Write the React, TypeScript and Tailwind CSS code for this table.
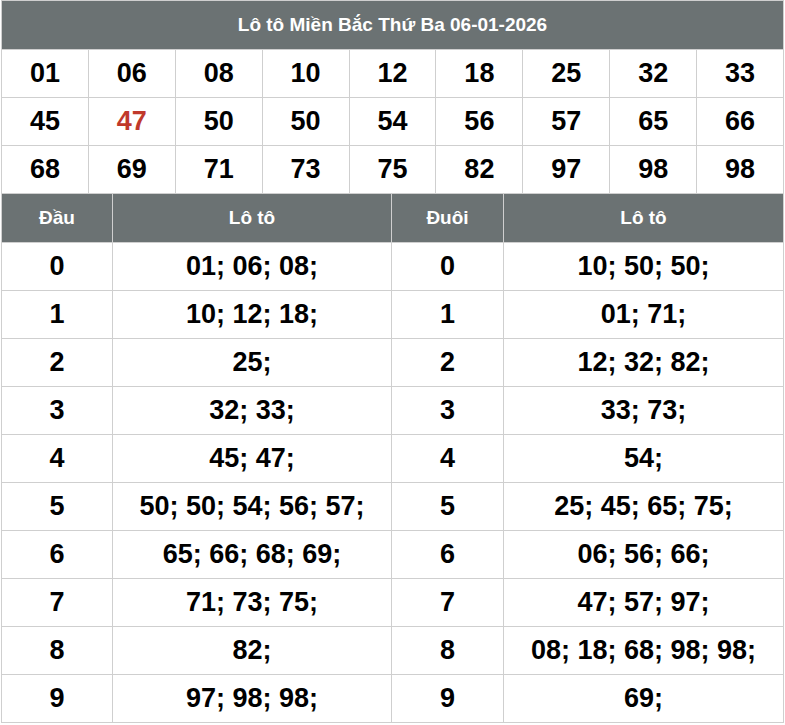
const top = [
  "01", "06", "08", "10", "12", "18", "25", "32", "33",
  "45", "47", "50", "50", "54", "56", "57", "65", "66",
  "68", "69", "71", "73", "75", "82", "97", "98", "98",
]

const rows: [string, string, string][] = [
  ["0", "01; 06; 08;", "10; 50; 50;"],
  ["1", "10; 12; 18;", "01; 71;"],
  ["2", "25;", "12; 32; 82;"],
  ["3", "32; 33;", "33; 73;"],
  ["4", "45; 47;", "54;"],
  ["5", "50; 50; 54; 56; 57;", "25; 45; 65; 75;"],
  ["6", "65; 66; 68; 69;", "06; 56; 66;"],
  ["7", "71; 73; 75;", "47; 57; 97;"],
  ["8", "82;", "08; 18; 68; 98; 98;"],
  ["9", "97; 98; 98;", "69;"],
]

const head = "bg-[#6b7273] text-white text-[19px] font-bold flex items-center justify-center"
const cell = "bg-white h-[47px] flex items-center justify-center text-[27px] font-bold"

export default function App() {
  return (
    <div className="bg-white min-h-[725px] pl-px" style={{ fontFamily: '"Liberation Sans", Arial, sans-serif' }}>
      <div className="w-[783px]">
        <div className="grid grid-cols-9 gap-px bg-[#cfcfcf] border border-[#cfcfcf]">
          <div className={`${head} col-span-9 h-[48px]`}>Lô tô Miền Bắc Thứ Ba 06-01-2026</div>
          {top.map((n, i) => (
            <div key={i} className={`${cell} ${i === 10 ? "text-[#c0392b]" : "text-black"}`}>
              {n}
            </div>
          ))}
        </div>
        <div className="grid grid-cols-[110px_278px_111px_1fr] gap-px bg-[#cfcfcf] border border-t-0 border-[#cfcfcf]">
          <div className={`${head} h-[48px]`}>Đầu</div>
          <div className={head}>Lô tô</div>
          <div className={head}>Đuôi</div>
          <div className={head}>Lô tô</div>
          {rows.map(([d, a, b]) => (
            <div key={d} className="contents">
              <div className={`${cell} text-black`}>{d}</div>
              <div className={`${cell} text-black`}>{a}</div>
              <div className={`${cell} text-black`}>{d}</div>
              <div className={`${cell} text-black`}>{b}</div>
            </div>
          ))}
        </div>
      </div>
    </div>
  )
}
